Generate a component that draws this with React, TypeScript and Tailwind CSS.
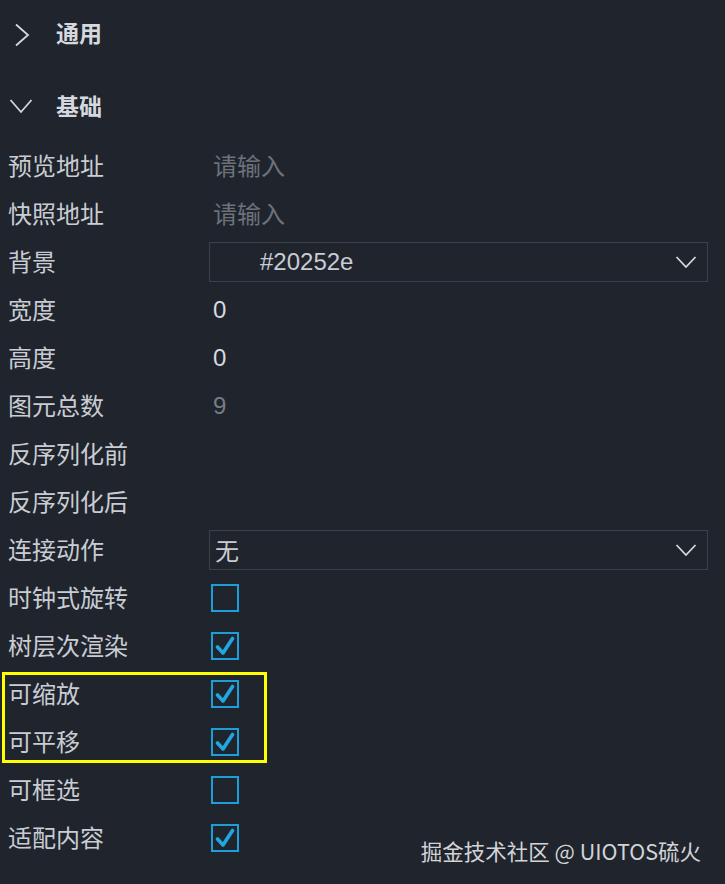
import React from 'react';

type Row =
  | { label: string; kind: 'input'; placeholder: string }
  | { label: string; kind: 'select'; value: string; indent?: boolean }
  | { label: string; kind: 'text'; value: string; muted?: boolean }
  | { label: string; kind: 'check'; checked: boolean }
  | { label: string; kind: 'empty' };

const ROWS: Row[] = [
  { label: '预览地址', kind: 'input', placeholder: '请输入' },
  { label: '快照地址', kind: 'input', placeholder: '请输入' },
  { label: '背景', kind: 'select', value: '#20252e', indent: true },
  { label: '宽度', kind: 'text', value: '0' },
  { label: '高度', kind: 'text', value: '0' },
  { label: '图元总数', kind: 'text', value: '9', muted: true },
  { label: '反序列化前', kind: 'empty' },
  { label: '反序列化后', kind: 'empty' },
  { label: '连接动作', kind: 'select', value: '无' },
  { label: '时钟式旋转', kind: 'check', checked: false },
  { label: '树层次渲染', kind: 'check', checked: true },
];

// rows marked with the yellow frame in the screenshot
const HIGHLIGHTED: Row[] = [
  { label: '可缩放', kind: 'check', checked: true },
  { label: '可平移', kind: 'check', checked: true },
];

const TAIL: Row[] = [
  { label: '可框选', kind: 'check', checked: false },
  { label: '适配内容', kind: 'check', checked: true },
];

const Chevron = ({ dir }: { dir: 'right' | 'down' }) =>
  dir === 'right' ? (
    <svg width="16" height="24" viewBox="0 0 16 24" fill="none">
      <path d="M2 1.5 L14 12 L2 22.5" stroke="#d4d8de" strokeWidth="1.8" />
    </svg>
  ) : (
    <svg width="24" height="16" viewBox="0 0 24 16" fill="none">
      <path d="M1.5 2 L12 14 L22.5 2" stroke="#d4d8de" strokeWidth="1.8" />
    </svg>
  );

const Checkbox = ({ checked }: { checked: boolean }) => (
  <div className="w-[28px] h-[28px] border-[2.5px] border-[#1c9fd8] flex items-center justify-center">
    {checked && (
      <svg width="20" height="20" viewBox="0 0 20 20">
        <path d="M2.5 11 L8 17 L17.5 2.5" fill="none" stroke="#1ea7e4" strokeWidth="3.6" strokeLinecap="round" strokeLinejoin="round" />
      </svg>
    )}
  </div>
);

const Value = ({ row }: { row: Row }) => {
  switch (row.kind) {
    case 'input':
      return <span className="text-[#6c727b] pl-[4px] pb-[2px] leading-none">{row.placeholder}</span>;
    case 'select':
      return (
        <div className="w-[499px] h-[40px] border-[1.5px] border-[#3b404a] flex items-center justify-between pr-[10px]">
          <span className={row.indent ? 'pl-[50px] font-["Liberation_Sans",sans-serif]' : 'pl-[5px]'}>{row.value}</span>
          <svg width="22" height="14" viewBox="0 0 22 14" fill="none">
            <path d="M1.5 2 L11 12 L20.5 2" stroke="#d4d8de" strokeWidth="1.8" />
          </svg>
        </div>
      );
    case 'text':
      return (
        <span className={`pl-[4px] font-["Liberation_Sans",sans-serif] ${row.muted ? 'text-[#767c85]' : 'text-[#d6dade]'}`}>
          {row.value}
        </span>
      );
    case 'check':
      return <div className="pl-[2px]"><Checkbox checked={row.checked} /></div>;
    default:
      return null;
  }
};

const PropRow = ({ row }: { row: Row }) => (
  <div className="h-12 flex items-center">
    <div className="w-[209px] shrink-0 pl-[8px] pb-[2px] leading-none">{row.label}</div>
    <Value row={row} />
  </div>
);

export default function App() {
  return (
    <div className="relative w-[725px] h-[884px] bg-[#20242d] text-[#c9cdd3] text-[24px] font-['Noto_Sans_CJK_SC',sans-serif] overflow-hidden">
      <div className="h-[70px] flex items-center pl-[14px] gap-[26px]">
        <Chevron dir="right" />
        <span className="font-bold text-[23px] leading-none text-[#d5d9df] mb-[5px]">通用</span>
      </div>
      <div className="h-[72px] flex items-center pl-[9px] gap-[23px]">
        <Chevron dir="down" />
        <span className="font-bold text-[23px] leading-none text-[#d5d9df] mb-[2px]">基础</span>
      </div>

      {ROWS.map((r) => (
        <PropRow key={r.label} row={r} />
      ))}

      <div className="relative">
        {HIGHLIGHTED.map((r) => (
          <PropRow key={r.label} row={r} />
        ))}
        <div className="absolute left-[2px] top-[2px] w-[265px] h-[91px] border-[3px] border-[#ffff00] pointer-events-none" />
      </div>

      {TAIL.map((r) => (
        <PropRow key={r.label} row={r} />
      ))}

      <div className="absolute right-[24px] bottom-[23px] text-[21.5px] leading-none text-[#d2d4d8]">
        掘金技术社区 @ UIOTOS硫火
      </div>
    </div>
  );
}
